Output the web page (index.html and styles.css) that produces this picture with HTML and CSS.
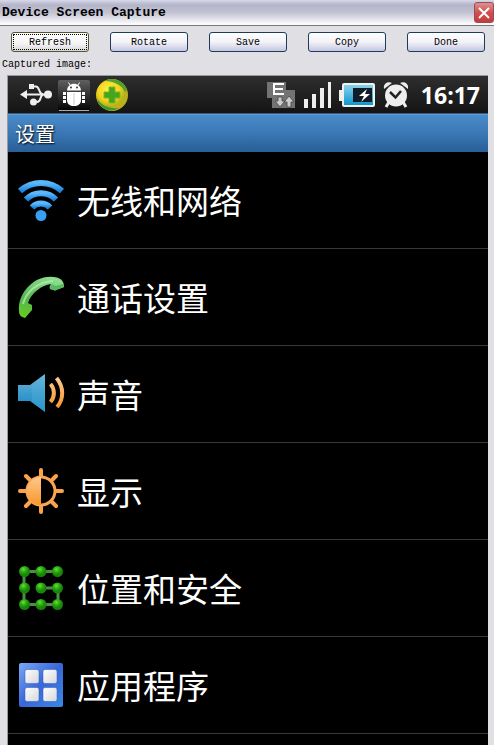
FILE: index.html
```html
<!doctype html>
<html lang="zh-CN">
<head>
    <meta charset="utf-8">
    <title>Device Screen Capture</title>
    <link rel="stylesheet" href="styles.css">
</head>

<body>
    <div class="titlebar">
        <h1>Device Screen Capture</h1>
        <button class="close" type="button" aria-label="Close">
            <svg width="12" height="12" viewBox="0 0 12 12"><path d="M1 1L11 11M11 1L1 11" stroke="#fff" stroke-width="2"/></svg>
        </button>
    </div>

    <div class="toolbar">
        <button class="btn active" type="button">Refresh</button>
        <button class="btn" type="button">Rotate</button>
        <button class="btn" type="button">Save</button>
        <button class="btn" type="button">Copy</button>
        <button class="btn" type="button">Done</button>
    </div>
    <p class="caption">Captured image:</p>

    <div class="screen">
        <div class="statusbar">
            <!-- usb -->
            <svg width="33" height="24" viewBox="0 0 33 24">
                <path d="M6 11.500H28M14 3.500H17C21 3.500 19 11.500 25 11.500M15 19H18C23 19 20 11.500 25 11.500" fill="none" stroke="#eee" stroke-width="2"/>
                <path d="M1 11.500L8 7V16Z" fill="#eee"/>
                <rect x="10" y="1" width="5" height="5" fill="#eee"/>
                <circle cx="14.500" cy="19" r="3.500" fill="#eee"/>
                <circle cx="29" cy="11.500" r="4" fill="#eee"/>
            </svg>
            <!-- debugging -->
            <svg width="32" height="32" viewBox="0 0 32 32">
                <defs><linearGradient id="tile" x1="0" y1="0" x2="0" y2="1"><stop offset="0" stop-color="#606060"/><stop offset=".5" stop-color="#333"/><stop offset="1" stop-color="#050505"/></linearGradient></defs>
                <rect x="0" y="1" width="32" height="30" rx="2" fill="url(#tile)"/>
                <path d="M1 31.500H31" stroke="#aaa"/>
                <path d="M9 11.500C9.500 2.500 22.500 2.500 23 11.500ZM9 13H23V21C23 25 20 27 16 27S9 25 9 21Z" fill="#fff"/>
                <path d="M12 6L10.500 3.500M20 6L21.500 3.500" stroke="#fff"/>
                <path d="M16 14V26" stroke="#ccc"/>
                <circle cx="13" cy="8.500" r="1" fill="#333"/><circle cx="19" cy="8.500" r="1" fill="#333"/>
                <path d="M6.500 13V25M25.500 13V25" fill="none" stroke="#fff" stroke-width="3" stroke-dasharray="3 1"/>
            </svg>
            <!-- antivirus -->
            <svg width="32" height="32" viewBox="0 0 32 32">
                <defs><radialGradient id="ball" cx=".4" cy=".35"><stop offset="0" stop-color="#fff34a"/><stop offset=".65" stop-color="#f6d41c"/><stop offset="1" stop-color="#b9b21c"/></radialGradient></defs>
                <circle cx="16" cy="16" r="16" fill="url(#ball)"/>
                <path d="M9 2C18 2 26 6 29 13L31 11C28 2 17-3 9 2Z" fill="#4da12e"/>
                <path d="M1 19C5 27 14 30 23 29C14 35 2 29 1 19Z" fill="#3f972e"/>
                <path d="M13 8H19V13H24V19H19V24H13V19H8V13H13Z" fill="#45a51e" stroke="#7db922"/>
            </svg>

            <div class="indicators">
                <!-- data link -->
                <svg width="28" height="28" viewBox="0 0 28 28">
                    <path d="M0 1H19V9H28V27H5V17H0Z" fill="#737373"/>
                    <path d="M17 3H7V13H17M7 8H16" fill="none" stroke="#fff" stroke-width="2"/>
                    <path d="M11 16H15V20H18L13 26L8 20H11ZM20 26H24V21H27L22 15L17 21H20Z" fill="#ccc" stroke="#555"/>
                </svg>
                <!-- signal -->
                <svg width="28" height="26" viewBox="0 0 28 26">
                    <path d="M1 17H5V26H1ZM9 12H13V26H9ZM17 6H21V26H17ZM25 0H28V26H25Z" fill="#eee"/>
                </svg>
                <!-- battery -->
                <svg width="36" height="26" viewBox="0 0 36 26">
                    <defs><linearGradient id="charge" x1="0" y1="0" x2="0" y2="1"><stop offset="0" stop-color="#8fd4ed"/><stop offset="1" stop-color="#0795cc"/></linearGradient></defs>
                    <path d="M0 8H4V19H0Z" fill="#eee"/>
                    <rect x="4" y="2" width="31" height="22" rx="1" fill="url(#charge)" stroke="#f0f0f0" stroke-width="2"/>
                    <rect x="14" y="6" width="19" height="14" fill="#101c28"/>
                    <path d="M28 7L20 14H25L22 20L31 12H26Z" fill="#fff"/>
                </svg>
                <!-- alarm -->
                <svg width="26" height="28" viewBox="0 0 26 28">
                    <path d="M6 21L3 26M20 21L23 26" stroke="#eee" stroke-width="3"/>
                    <path d="M1 8C0 2 5 0 9 2ZM25 8C26 2 21 0 17 2Z" fill="#eee"/>
                    <circle cx="13" cy="14.500" r="11" fill="#eee"/>
                    <path d="M7 11L12.500 16.500L18 10" fill="none" stroke="#222" stroke-width="2.500"/>
                </svg>
                <span class="clock">16:17</span>
            </div>
        </div>

        <h2 class="heading">设置</h2>

        <ul class="settings">
            <li><a href="#">
                <svg width="48" height="48" viewBox="0 0 48 48">
                    <defs><linearGradient id="blue" x1="0" y1="0" x2="0" y2="1"><stop offset="0" stop-color="#5db8fb"/><stop offset="1" stop-color="#1d84e0"/></linearGradient></defs>
                    <g fill="none" stroke="url(#blue)" stroke-width="6">
                        <path d="M3 15A31.400 31.400 0 0 1 45 15"/>
                        <path d="M9 23.500A21 21 0 0 1 39 23.500"/>
                        <path d="M15 31.500A12 12 0 0 1 33 31.500"/>
                    </g>
                    <circle cx="24" cy="39.500" r="5.500" fill="#399ff2"/>
                </svg>
                无线和网络
            </a></li>
            <li><a href="#">
                <svg width="48" height="48" viewBox="0 0 48 48">
                    <defs><linearGradient id="green" x1=".6" y1="0" x2=".2" y2="1"><stop offset="0" stop-color="#8ade8c"/><stop offset=".6" stop-color="#55b451"/><stop offset="1" stop-color="#65cc22"/></linearGradient></defs>
                    <path d="M2 38C1 29 5 19 13 12C20 5 31 2 40 4.500C45 6 47 9 47 14L38 17.500L33 16C32 14 33 13 34 11C25 12 14 20 11 30L15 32V37L8 45C4 44 2 42 2 38Z" fill="url(#green)"/>
                    <path d="M6 31C9 19 20 9 36 8" fill="none" stroke="#b9ecb6" stroke-width="2" opacity=".7"/>
                    <path d="M34 11L33 16L38 17.500L47 14L46 11L39 13Z" fill="#59b862"/>
                </svg>
                通话设置
            </a></li>
            <li><a href="#">
                <svg width="48" height="48" viewBox="0 0 48 48">
                    <defs>
                        <linearGradient id="cone" x1="0" y1="0" x2="0" y2="1"><stop offset="0" stop-color="#73b8da"/><stop offset=".5" stop-color="#3c9bcd"/><stop offset="1" stop-color="#1583c3"/></linearGradient>
                        <linearGradient id="orange" x1="0" y1="0" x2="0" y2="1"><stop offset="0" stop-color="#ffc98c"/><stop offset="1" stop-color="#f8962a"/></linearGradient>
                    </defs>
                    <path d="M1 15H13L28 4V42L13 31H1Z" fill="url(#cone)"/>
                    <path d="M15 15L28 4V42L15 32Z" fill="#55b1dc" opacity=".35"/>
                    <path d="M33.500 14C38 19 38 27 33.500 32M39.500 8C47 17 47 29 40 37" fill="none" stroke="url(#orange)" stroke-width="4"/>
                </svg>
                声音
            </a></li>
            <li><a href="#">
                <svg width="48" height="48" viewBox="0 0 48 48">
                    <path d="M24 3V9M24 39V45M3 24H9M39 24H45M9 9L13 13M35 35L39 39M9 39L13 35M35 13L39 9" stroke="#fba34a" stroke-width="4" stroke-linecap="round"/>
                    <circle cx="24" cy="24" r="14" fill="#000" stroke="#fba650" stroke-width="3"/>
                    <path d="M24 10A14 14 0 0 0 24 38Z" fill="url(#orange)"/>
                </svg>
                显示
            </a></li>
            <li><a href="#">
                <svg width="48" height="48" viewBox="0 0 48 48">
                    <defs><radialGradient id="dot" cx=".4" cy=".3"><stop offset="0" stop-color="#67e23c"/><stop offset=".5" stop-color="#2caf12"/><stop offset="1" stop-color="#198408"/></radialGradient></defs>
                    <path d="M41 7.500H7V40.500H41V24H24" fill="none" stroke="#4e8d49" stroke-width="3"/>
                    <g fill="url(#dot)">
                        <circle cx="7.500" cy="7.500" r="5.500"/><circle cx="24" cy="7.500" r="5.500"/><circle cx="40.500" cy="7.500" r="5.500"/>
                        <circle cx="7.500" cy="24" r="5.500"/><circle cx="24" cy="24" r="5.500"/><circle cx="40.500" cy="24" r="5.500"/>
                        <circle cx="7.500" cy="40.500" r="5.500"/><circle cx="24" cy="40.500" r="5.500"/><circle cx="40.500" cy="40.500" r="5.500"/>
                    </g>
                </svg>
                位置和安全
            </a></li>
            <li><a href="#">
                <svg width="48" height="48" viewBox="0 0 48 48">
                    <defs>
                        <linearGradient id="app" x1="0" y1="0" x2="1" y2="1"><stop offset="0" stop-color="#7ba9f6"/><stop offset=".5" stop-color="#3867d9"/><stop offset="1" stop-color="#3789e6"/></linearGradient>
                        <linearGradient id="cell" x1="0" y1="0" x2="1" y2="1"><stop offset="0" stop-color="#fff"/><stop offset="1" stop-color="#d6d6dc"/></linearGradient>
                    </defs>
                    <rect x="2" y="2" width="44" height="44" rx="2" fill="url(#app)"/>
                    <g fill="url(#cell)" stroke="#3059b5" stroke-opacity=".5">
                        <rect x="8" y="8.500" width="14" height="14" rx="2"/><rect x="26" y="8.500" width="14" height="14" rx="2"/>
                        <rect x="8" y="26.500" width="14" height="14" rx="2"/><rect x="26" y="26.500" width="14" height="14" rx="2"/>
                    </g>
                </svg>
                应用程序
            </a></li>
        </ul>
    </div>
</body>
</html>
```
FILE: styles.css
```css
* {
  box-sizing: border-box;
}

body {
  display: flex;
  flex-direction: column;
  min-height: 100vh;
  margin: 0;
  background: #e0dfe3;
  color: #000;
  font-family: "Liberation Mono", monospace;
}

svg {
  display: block;
  flex: none;
}

.titlebar {
  display: flex;
  align-items: center;
  justify-content: space-between;
  height: 26px;
  padding-left: 2px;
  border-bottom: 1px solid #77777c;
  background: linear-gradient(#d8d8ea, #b4b4ca 20%, #c2c2d2 50%, #fafafc 95%);
}

.titlebar h1 {
  margin: 0;
  font-size: 13px;
  line-height: 24px;
}

.close {
  display: flex;
  align-items: center;
  justify-content: center;
  width: 20px;
  height: 21px;
  padding: 0;
  border: 1px solid #a04a50;
  border-radius: 3px;
  background: linear-gradient(#dc9292, #cf5050 50%, #c23c3c);
}

.toolbar {
  display: grid;
  grid-template-columns: repeat(5, 1fr);
  gap: 21px;
  padding: 6px 9px 6px 11px;
}

.btn {
  height: 20px;
  padding: 0;
  border: 1px solid #1f3b5c;
  border-radius: 3px;
  background: linear-gradient(#fff, #f2f2f8 50%, #c6c6e0);
  color: #000;
  font: 10px "Liberation Mono", monospace;
}

.btn.active {
  border-color: #55552f;
  background: linear-gradient(#fff, #f4f4f4 60%, #d6d6dc);
  outline: 1px dotted #000;
  outline-offset: -3px;
}

.caption {
  margin: 0;
  padding-left: 2px;
  font-size: 10px;
  line-height: 13px;
}

.screen {
  flex: 1;
  margin: 4px 6px 0 7px;
  border-top: 1px solid #9a9a9e;
  border-left: 1px solid #9a9a9e;
  background: #000;
  color: #fff;
  font-family: "Noto Sans CJK SC", sans-serif;
}

.statusbar {
  display: flex;
  align-items: center;
  gap: 6px;
  height: 38px;
  padding: 0 8px 0 11px;
  border-bottom: 1px solid #3f5d7c;
  background: linear-gradient(#2e2e2e, #141414);
}

.indicators {
  display: flex;
  align-items: center;
  gap: 8px;
  margin-left: auto;
}

.clock {
  padding-left: 4px;
  font: bold 23px/36px "Open Sans", sans-serif;
}

.heading {
  margin: 0;
  padding: 0 7px;
  border-top: 1px solid #5c9ad4;
  background: linear-gradient(#4a8bca, #3a77b4 50%, #285f96);
  font-size: 20px;
  font-weight: normal;
  line-height: 37px;
  text-shadow: 1px 1px 2px #000;
}

.settings {
  margin: 0;
  padding: 0;
  list-style: none;
}

.settings li {
  border-bottom: 1px solid #383838;
}

.settings a {
  display: flex;
  align-items: center;
  gap: 12px;
  height: 96px;
  padding: 0 9px;
  color: #fff;
  font-size: 33px;
  text-decoration: none;
}
```
